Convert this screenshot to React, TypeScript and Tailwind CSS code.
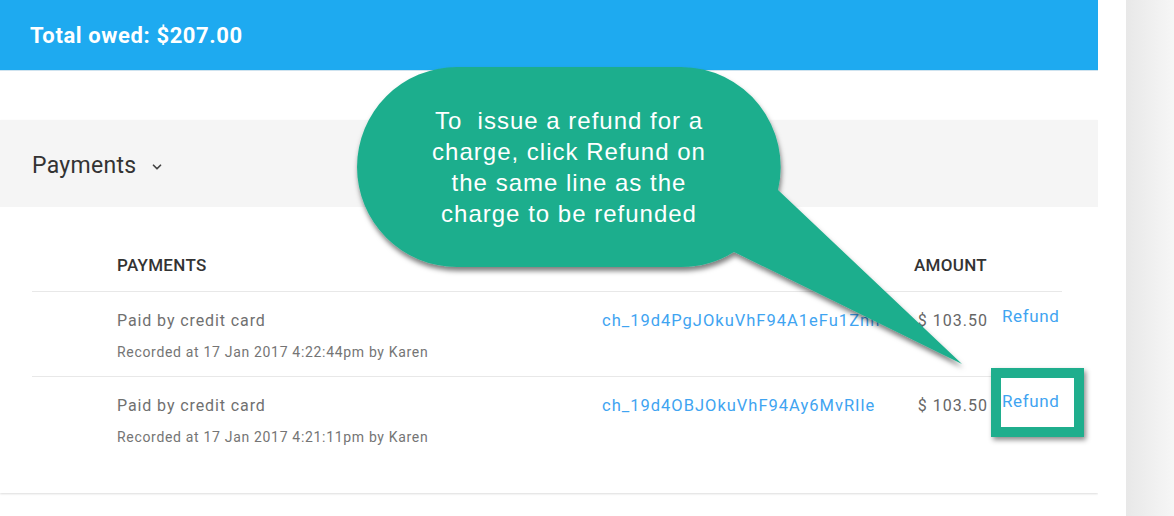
import { ChevronDown } from 'lucide-react';

const payments = [
  { method: 'Paid by credit card', recorded: 'Recorded at 17 Jan 2017 4:22:44pm by Karen', charge: 'ch_19d4PgJOkuVhF94A1eFu1Znh', amount: '$ 103.50' },
  { method: 'Paid by credit card', recorded: 'Recorded at 17 Jan 2017 4:21:11pm by Karen', charge: 'ch_19d4OBJOkuVhF94Ay6MvRIle', amount: '$ 103.50' },
];

const cols = 'grid grid-cols-[85px_485px_311px_77px_72px]';

export default function App() {
  return (
    <div className="relative flex h-[516px] w-[1174px] overflow-hidden bg-white font-['Roboto',sans-serif]">
      <div className="flex w-[1098px] flex-col">
        {/* Total banner */}
        <div className="flex h-[71px] items-center border-b border-[#cfe3ef] bg-[#1eaaf0] px-[30px]">
          <p className="text-[22px] font-bold tracking-[0.6px] text-white">Total owed: $207.00</p>
        </div>

        <div className="h-[49px]" />

        {/* Payments card */}
        <div className="shadow-[0_1px_2px_rgba(0,0,0,0.14)]">
          <div className="flex h-[87px] items-center gap-[14px] bg-[#f5f5f5] px-[32px] pt-[5px]">
            <span className="text-[23px] tracking-[0.3px] text-[#333]">Payments</span>
            <ChevronDown size={14} strokeWidth={3} className="mt-[2px] text-[#444]" />
          </div>

          <div className="bg-white pl-[32px] pr-[36px] pt-[33px] pb-[31px]">
            <div className={`${cols} h-[52px] items-center border-b border-[#e8e8e8] text-[17px] font-medium tracking-[0.3px] text-[#333]`}>
              <span />
              <span>PAYMENTS</span>
              <span />
              <span className="text-right pr-[3px]">AMOUNT</span>
              <span />
            </div>

            {payments.map((p, i) => (
              <div key={i} className={`${cols} h-[85px] items-start pt-[19px] ${i === 0 ? 'border-b border-[#e8e8e8]' : ''}`}>
                <span />
                <div className="flex flex-col">
                  <span className="text-[16px] leading-[20px] tracking-[0.9px] text-[#707070]">{p.method}</span>
                  <span className="mt-[13px] text-[14px] leading-[16px] tracking-[0.68px] text-[#757575]">{p.recorded}</span>
                </div>
                <span className="text-[16.5px] leading-[20px] tracking-[1px] text-[#3fa4f1]">{p.charge}</span>
                <span className="text-right pr-[2px] text-[16px] leading-[20px] tracking-[1px] text-[#666]">{p.amount}</span>
                <span className="-mt-[6px] pl-[12px] text-[17px] leading-[22px] tracking-[0.6px] text-[#3fa4f1]">Refund</span>
              </div>
            ))}
          </div>
        </div>
      </div>

      <div className="w-[28px] bg-white" />
      <div className="w-[48px] bg-gradient-to-r from-[#e8e8e8] to-[#f6f6f6]" />

      {/* Callout bubble */}
      <svg className="pointer-events-none absolute left-0 top-0" width="1174" height="516">
        <defs>
          <filter id="bubbleShadow" x="-10%" y="-10%" width="130%" height="130%">
            <feDropShadow dx="1" dy="4" stdDeviation="2.5" floodColor="#000" floodOpacity="0.5" />
          </filter>
        </defs>
        <path
          d="M457,67 H681 A100,100 0 0 1 778,190 L962,364 L734,252 A100,100 0 0 1 681,267 H457 A100,100 0 0 1 457,67 Z"
          fill="#1fae8d"
          filter="url(#bubbleShadow)"
        />
      </svg>
      <div className="pointer-events-none absolute left-[357px] top-[105px] flex w-[424px] flex-col items-center font-['Liberation_Sans',Arial,sans-serif] text-[24px] leading-[31px] tracking-[1px] text-white">
        <span className="whitespace-pre">To  issue a refund for a</span>
        <span>charge, click Refund on</span>
        <span>the same line as the</span>
        <span>charge to be refunded</span>
      </div>

      {/* Highlight box */}
      <div className="pointer-events-none absolute left-[991px] top-[368px] h-[69px] w-[93px] border-[10px] border-[#1fae8d] shadow-[2px_3px_5px_rgba(0,0,0,0.45)]" />
    </div>
  );
}
